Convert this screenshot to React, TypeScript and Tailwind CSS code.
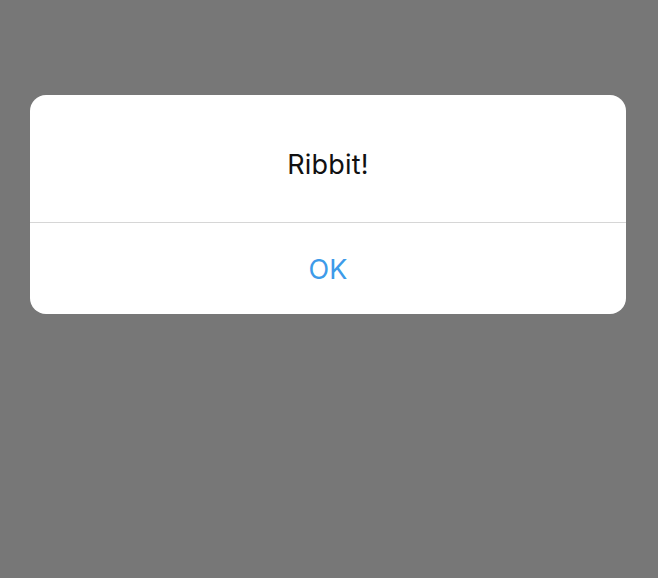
import React from "react";

export default function App() {
  return (
    <div className="w-[658px] h-[578px] bg-[#777777] pt-[95px] pl-[30px]" style={{ fontFamily: "Inter, 'Noto Sans', sans-serif" }}>
      <div className="w-[596px] bg-white rounded-[16px] overflow-hidden flex flex-col">
        <div className="h-[127px] flex items-center justify-center pt-[12px]">
          <span className="text-[27px] text-[#111111] leading-none tracking-[0.2px]">Ribbit!</span>
        </div>
        <div className="h-px bg-[#d6d6d6]" />
        <div className="h-[91px] flex items-center justify-center pt-[1px]">
          <span className="text-[27px] text-[#3d9be9] leading-none">OK</span>
        </div>
      </div>
    </div>
  );
}
